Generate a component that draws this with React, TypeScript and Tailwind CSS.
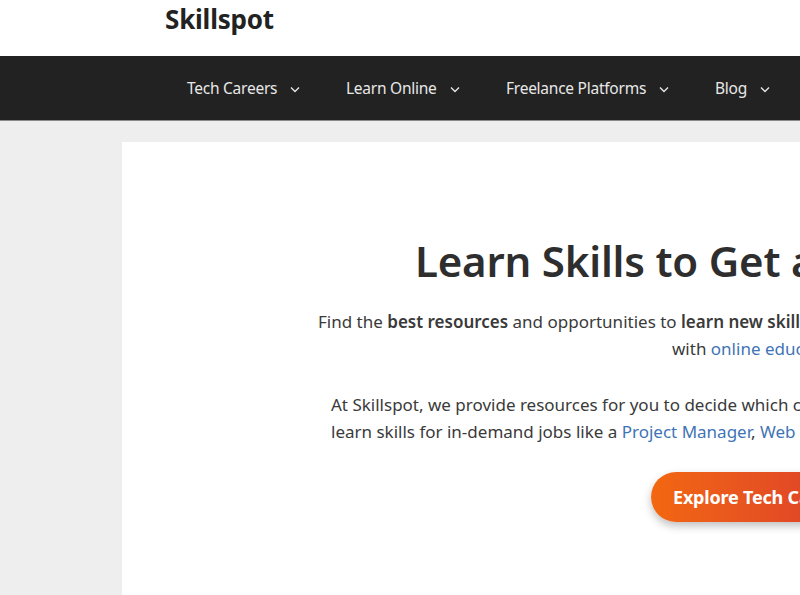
import React from "react";

const F = { fontFamily: '"Segoe UI", "Noto Sans", "Open Sans", sans-serif' };

function Chev() {
  return (
    <svg width="10" height="7" viewBox="0 0 10 7" className="ml-[13px]">
      <path d="M1 1.5 L5 5.5 L9 1.5" fill="none" stroke="#e5e5e5" strokeWidth="1.4" />
    </svg>
  );
}

export default function App() {
  const nav = [
    { t: "Tech Careers", w: "w-[159px]" },
    { t: "Learn Online", w: "w-[160px]" },
    { t: "Freelance Platforms", w: "w-[209px]" },
    { t: "Blog", w: "w-[100px]" },
  ];
  return (
    <div className="w-[800px] h-[595px] overflow-hidden bg-[#eeeeee] text-[#333333]" style={F}>
      <header className="h-[56px] bg-white pl-[165px] pt-[2px]">
        <div className="text-[26px] font-bold leading-[34px] text-[#222222] tracking-[-0.2px]">Skillspot</div>
      </header>
      <nav className="h-[65px] bg-[#222222] border-b border-[#8a8a8a] flex items-center pl-[187px] whitespace-nowrap">
        {nav.map((n) => (
          <div key={n.t} className={`${n.w} shrink-0 flex items-center text-[15.5px] tracking-[-0.25px] text-[#e8e8e8] pt-[2px]`}>
            <span>{n.t}</span>
            <Chev />
          </div>
        ))}
      </nav>
      <main className="pt-[21px] pl-[122px]">
        <div className="w-[1200px] h-[500px] bg-white whitespace-nowrap">
          <h1 className="pl-[293px] pt-[91px] text-[42px] font-semibold leading-[56px] text-[#2e2e2e] tracking-[-0.2px]">
            Learn Skills to Get a Tech Job
          </h1>
          <p className="pl-[196px] mt-[19px] text-[17px] leading-[27px] text-[#3a3a3a]">
            Find the <b className="font-semibold">best resources</b> and opportunities to{" "}
            <b className="font-semibold">learn new skills</b> and find a job you love
          </p>
          <p className="pl-[550px] text-[17px] leading-[27px] text-[#3a3a3a]">
            with <span className="text-[#3f74b5]">online education</span>
          </p>
          <p className="pl-[209px] mt-[29px] text-[17px] leading-[27px] text-[#3a3a3a]">
            At Skillspot, we provide resources for you to decide which career is best for you and
          </p>
          <p className="pl-[209px] text-[17px] leading-[27px] text-[#3a3a3a]">
            learn skills for in-demand jobs like a <span className="text-[#3f74b5]">Project Manager</span>,{" "}
            <span className="text-[#3f74b5]">Web Developer</span>
          </p>
          <div className="pl-[529px] mt-[27px]">
            <button className="h-[50px] px-[22px] rounded-full bg-gradient-to-r from-[#f2670f] to-[#d9372b] text-white text-[18px] font-bold tracking-[-0.2px] shadow-[0_4px_8px_rgba(0,0,0,0.25)]">
              Explore Tech Careers
            </button>
          </div>
        </div>
      </main>
    </div>
  );
}
